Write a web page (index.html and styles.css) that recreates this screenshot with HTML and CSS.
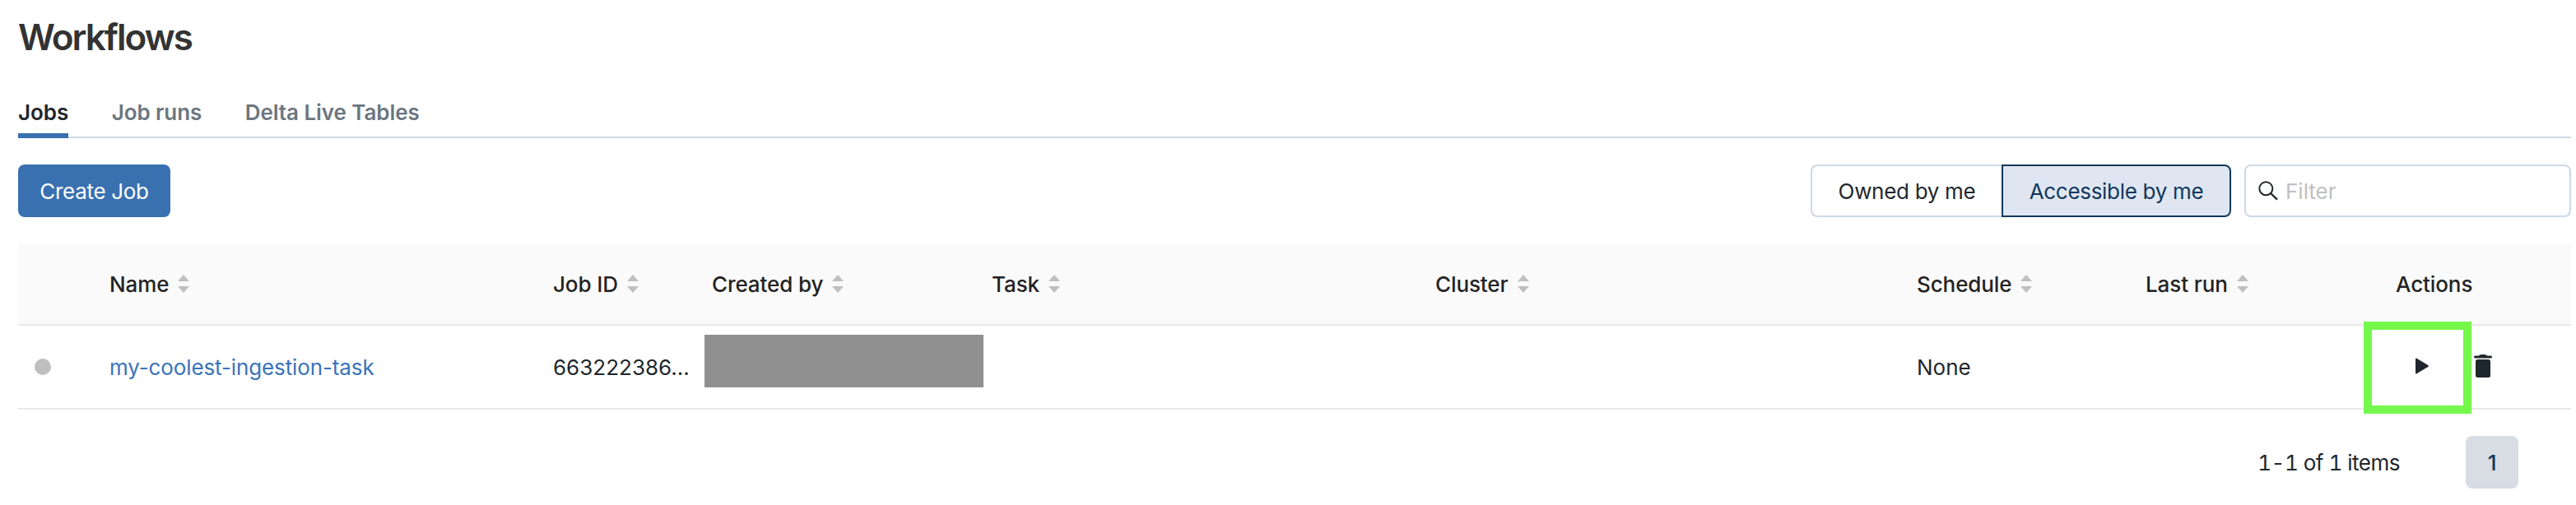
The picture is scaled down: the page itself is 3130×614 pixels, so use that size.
FILE: index.html
```html
<!DOCTYPE html>
<html lang="en">
<head>
<meta charset="utf-8">
<title>Workflows</title>
<link rel="stylesheet" href="styles.css">
</head>
<body>
<svg class="defs" width="0" height="0" aria-hidden="true">
  <symbol id="sorter" viewBox="0 0 14 22"><path d="M7 0l7 8H0zM0 14h14l-7 8z" fill="#bfbfbf"/></symbol>
</svg>
<main class="page">
  <h1 class="title">Workflows</h1>
  <nav class="tabs">
    <a class="tab active">Jobs</a>
    <a class="tab">Job runs</a>
    <a class="tab">Delta Live Tables</a>
  </nav>
  <section class="toolbar">
    <button class="create">Create Job</button>
    <div class="filters">
      <div class="segmented">
        <button class="segment owned">Owned by me</button>
        <button class="segment accessible">Accessible by me</button>
      </div>
      <label class="search">
        <svg class="search-icon" viewBox="0 0 24 24"><circle cx="9.3" cy="9.3" r="8" fill="none" stroke="#1f272d" stroke-width="2"/><path d="M15 15l8 7.7" stroke="#1f272d" stroke-width="2.4"/></svg>
        <span class="placeholder">Filter</span>
      </label>
    </div>
  </section>
  <section class="table">
    <div class="row head">
      <div class="cell"></div>
      <div class="cell"><span>Name</span><svg class="sorter"><use href="#sorter"/></svg></div>
      <div class="cell"><span>Job ID</span><svg class="sorter"><use href="#sorter"/></svg></div>
      <div class="cell"><span>Created by</span><svg class="sorter"><use href="#sorter"/></svg></div>
      <div class="cell"><span>Task</span><svg class="sorter"><use href="#sorter"/></svg></div>
      <div class="cell"><span>Cluster</span><svg class="sorter"><use href="#sorter"/></svg></div>
      <div class="cell"><span>Schedule</span><svg class="sorter"><use href="#sorter"/></svg></div>
      <div class="cell"><span>Last run</span><svg class="sorter"><use href="#sorter"/></svg></div>
      <div class="cell"><span>Actions</span></div>
    </div>
    <div class="row body">
      <div class="cell status"><i class="dot"></i></div>
      <div class="cell"><a class="link">my-coolest-ingestion-task</a></div>
      <div class="cell"><span>663222386...</span></div>
      <div class="cell redacted"><i class="redaction"></i></div>
      <div class="cell"></div>
      <div class="cell"></div>
      <div class="cell"><span>None</span></div>
      <div class="cell"></div>
      <div class="cell actions">
        <svg class="play" viewBox="0 0 16 20"><path d="M0 1.6Q0 0 1.5.8L15.2 9Q16.6 10 15.2 11L1.5 19.2Q0 20 0 18.4z" fill="#1f272d"/></svg>
        <svg class="trash" viewBox="0 0 22 28"><path d="M1.5 1.500H6Q7 0 9 0h4q2 0 3 1.500h4.500Q22 1.500 22 3T20.500 4.500h-19Q0 4.500 0 3T1.500 1.500zM4.500 6h13q2.500 0 2.500 2.500v17q0 2.500-2.500 2.500h-13Q2 28 2 25.500v-17Q2 6 4.500 6z" fill="#1f272d"/></svg>
        <i class="highlight"></i>
      </div>
    </div>
  </section>
  <footer class="pagination">
    <span class="total">1-1 of 1 items</span>
    <button class="page-number">1</button>
  </footer>
</main>
</body>
</html>
```
FILE: styles.css
```css
* { box-sizing: border-box; }
body {
  margin: 0;
  background: #fff;
  color: #1f272d;
  font: 400 26px/40px Inter, "Liberation Sans", sans-serif;
}
.defs { display: block; }
.page { width: 3130px; height: 614px; padding: 0 6px 0 22px; overflow: hidden; }
span, .link { white-space: nowrap; }
button { font: inherit; margin: 0; padding: 2px 0 0; border: 0; color: inherit; letter-spacing: -0.3px; }
.title {
  height: 92px;
  margin: 0;
  padding-top: 15px;
  font-size: 44px;
  line-height: 60px;
  font-weight: 600;
  letter-spacing: -1.95px;
  color: #333;
}
.tabs { display: flex; gap: 52.5px; height: 76px; border-bottom: 2px solid #cdd9e5; }
.tab { height: 76px; padding-top: 25px; font-weight: 600; letter-spacing: -0.07px; color: #6b7680; }
.tab.active { color: #1f272d; border-bottom: 6px solid #3970b0; }
.toolbar { display: flex; justify-content: space-between; height: 128px; padding: 32px 0; }
.create { width: 185px; height: 64px; border-radius: 8px; background: #3970b0; color: #fff; }
.filters { display: flex; gap: 16px; }
.segmented { display: flex; }
.segment { height: 64px; background: #fff; border: 2px solid #cdd9e5; }
.owned { width: 232px; border-right: 0; border-radius: 8px 0 0 8px; }
.accessible { width: 279px; background: #dfe6f1; border-color: #11375c; border-radius: 0 8px 8px 0; color: #11375c; }
.search {
  display: flex;
  align-items: center;
  width: 397px;
  height: 64px;
  padding-left: 15px;
  border: 2px solid #cdd9e5;
  border-radius: 8px;
  color: #bfbfbf;
}
.search-icon { width: 24px; height: 24px; margin-right: 9px; }
.placeholder { padding-top: 2px; }
.row {
  display: grid;
  grid-template-columns: 96px 539px 193px 340px 539px 585px 278px 304px 1fr;
  border-bottom: 2px solid #e8e8e8;
}
.head { height: 100px; background: #fafafa; font-weight: 500; color: #232323; }
.body { height: 102px; }
.cell { display: flex; align-items: center; padding-left: 15px; }
.cell span, .link { padding-top: 2px; }
.head .cell { letter-spacing: -0.1px; }
.sorter { width: 14px; height: 22px; margin-left: 11px; }
.status { padding-left: 20px; }
.dot { width: 20px; height: 20px; border-radius: 50%; background: #bfbfbf; }
.link { color: #3a73b9; letter-spacing: -0.12px; }
.redacted { padding: 0 0 14px 6px; }
.redaction { width: 339px; height: 64px; background: #909090; flex: none; }
.actions { position: relative; padding: 0 0 2px 39px; }
.play { width: 16px; height: 20px; margin-right: 55px; }
.trash { width: 22px; height: 28px; }
.highlight {
  position: absolute;
  left: -24px;
  top: -5px;
  width: 131px;
  height: 112px;
  border: 10px solid #75f74c;
}
.pagination { display: flex; align-items: center; justify-content: flex-end; height: 128px; padding-right: 64px; }
.total { margin-right: 80px; padding-top: 2px; font-variant-numeric: tabular-nums; letter-spacing: -0.5px; }
.page-number { width: 64px; height: 64px; border-radius: 8px; background: #d8dde4; color: #11375c; font-weight: 500; }
```
